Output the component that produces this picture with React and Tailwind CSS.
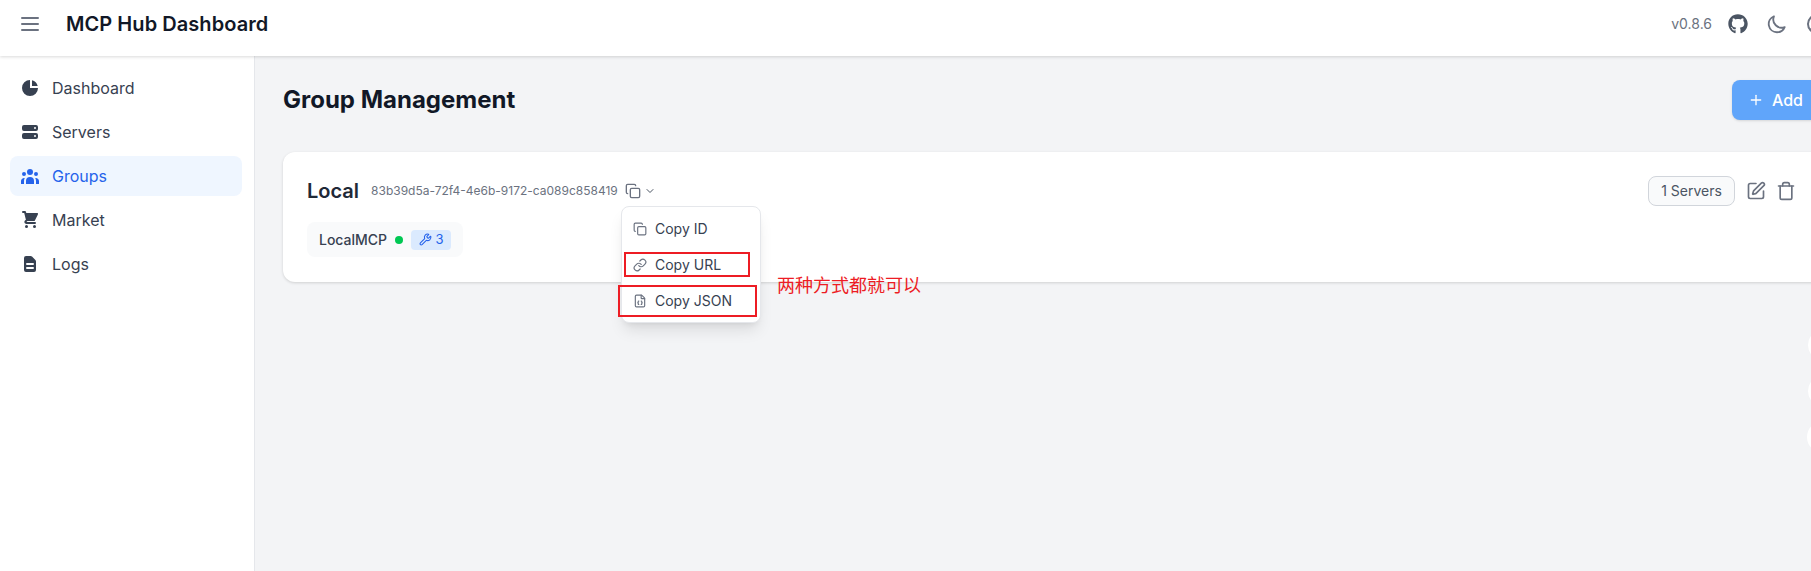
import React from "react";
import { HiChartPie, HiServer, HiUserGroup, HiShoppingCart, HiDocumentText, HiOutlineMenu, HiOutlineMoon, HiOutlineUserCircle } from "react-icons/hi";
import { FaGithub } from "react-icons/fa";
import { Copy, ChevronDown, Link, FileBraces, Wrench, SquarePen, Trash, Plus } from "lucide-react";

const nav = [
  ["Dashboard", HiChartPie],
  ["Servers", HiServer],
  ["Groups", HiUserGroup, true],
  ["Market", HiShoppingCart],
  ["Logs", HiDocumentText],
];

export default function App() {
  return (
    <div className="w-[1811px] h-[571px] overflow-hidden bg-[#f3f4f6] font-['Inter',sans-serif] relative flex flex-col">
      <header className="h-14 shrink-0 w-[1860px] bg-white shadow-[0_1px_3px_rgba(0,0,0,0.15)] relative z-10 flex items-center justify-between pl-[18px] pr-[31px] pb-2">
        <div className="flex items-center">
          <HiOutlineMenu className="w-6 h-6 text-[#6b7280]" />
          <span className="ml-6 text-[20px] font-semibold tracking-[0.06px] text-[#111827]">MCP Hub Dashboard</span>
        </div>
        <div className="flex items-center">
          <span className="text-sm text-[#6b7280]">v0.8.6</span>
          <FaGithub className="ml-4 w-5 h-5 text-[#4b5563]" />
          <HiOutlineMoon className="ml-[18px] w-[22px] h-[22px] text-[#6b7280]" />
          <HiOutlineUserCircle className="ml-[17px] w-6 h-6 text-[#6b7280]" />
        </div>
      </header>
      <div className="flex flex-1 min-h-0">
        <aside className="w-[255px] shrink-0 bg-white border-r border-[#e5e7eb] pt-3 pl-2.5 pr-3 flex flex-col gap-1">
          {nav.map(([label, Icon, active]) => (
            <div key={label} className={`h-10 flex items-center pl-2.5 rounded-lg text-base ${active ? "bg-[#eff6ff] text-[#2563eb]" : "text-[#374151]"}`}>
              <Icon className="w-5 h-5 mr-3" />
              <span>{label}</span>
            </div>
          ))}
        </aside>
        <main className="w-[1600px] shrink-0 pl-7 pt-6">
          <div className="flex items-center justify-between h-10">
            <h1 className="text-2xl font-bold text-[#111827]">Group Management</h1>
            <button className="mr-[3px] w-[120px] h-10 bg-[#60a5fa] rounded-lg text-white text-base font-medium flex items-center pl-4 shadow-sm">
              <Plus className="w-4 h-4 mr-2" />Add
            </button>
          </div>
          <div className="mt-[32px] h-[130px] w-[1560px] bg-white rounded-xl shadow-[0_1px_3px_rgba(0,0,0,0.15)] px-6 pt-6">
            <div className="flex items-center justify-between">
              <div className="flex items-center">
                <span className="text-[20px] font-semibold text-[#1f2937]">Local</span>
                <span className="ml-3 text-xs text-[#6b7280]">83b39d5a-72f4-4e6b-9172-ca089c858419</span>
                <Copy className="ml-[7px] w-4 h-4 text-[#6b7280]" />
                <ChevronDown className="ml-[3px] w-3 h-3 text-[#4b5563]" />
              </div>
              <div className="flex items-center mr-[23px]">
                <span className="h-[30px] w-[87px] justify-center flex items-center rounded-lg border border-[#d1d5db] bg-[#f9fafb] text-sm text-[#4b5563]">1 Servers</span>
                <SquarePen className="ml-[11px] w-5 h-5 text-[#6b7280]" />
                <Trash className="ml-2.5 w-5 h-5 text-[#6b7280]" />
              </div>
            </div>
            <div className="mt-4 inline-flex items-center h-[35px] px-3 rounded-lg bg-[#f9fafb]">
              <span className="text-sm font-medium text-[#374151]">LocalMCP</span>
              <span className="ml-2 w-2 h-2 rounded-full bg-[#00c853]" />
              <span className="ml-2 h-5 w-10 justify-center rounded bg-[#dbeafe] text-[#2563eb] text-[13px] flex items-center gap-1"><Wrench className="w-[13px] h-[13px]" />3</span>
            </div>
          </div>
        </main>
      </div>

      <div className="absolute left-[621px] top-[206px] w-[140px] h-[117px] bg-white rounded-lg border border-[#e5e7eb] shadow-lg z-20 flex flex-col pt-1 text-sm text-[#374151]">
        <div className="h-9 flex items-center pl-[11px]"><Copy className="w-3.5 h-3.5 mr-2 text-[#6b7280]" />Copy ID</div>
        <div className="h-9 flex items-center pl-[11px]"><Link className="w-3.5 h-3.5 mr-2 text-[#6b7280]" />Copy URL</div>
        <div className="h-9 flex items-center pl-[11px]"><FileBraces className="w-3.5 h-3.5 mr-2 text-[#6b7280]" />Copy JSON</div>
      </div>
      <div className="absolute left-[624px] top-[252px] w-[126px] h-[25px] border-2 border-[#ed1c24] z-30" />
      <div className="absolute left-[618px] top-[285px] w-[139px] h-[32px] border-2 border-[#ed1c24] z-30" />
      <div className="absolute left-[777px] top-[271px] text-[18px] text-[#ed1c24] z-30 font-['Noto_Sans_CJK_SC',sans-serif]">两种方式都就可以</div>

      <div className="absolute left-[1808px] top-[329px] w-8 h-8 rounded-full bg-white" />
      <div className="absolute left-[1808px] top-[375px] w-8 h-8 rounded-full bg-white" />
      <div className="absolute left-[1807px] top-[421px] w-8 h-8 rounded-full bg-white" />
    </div>
  );
}
